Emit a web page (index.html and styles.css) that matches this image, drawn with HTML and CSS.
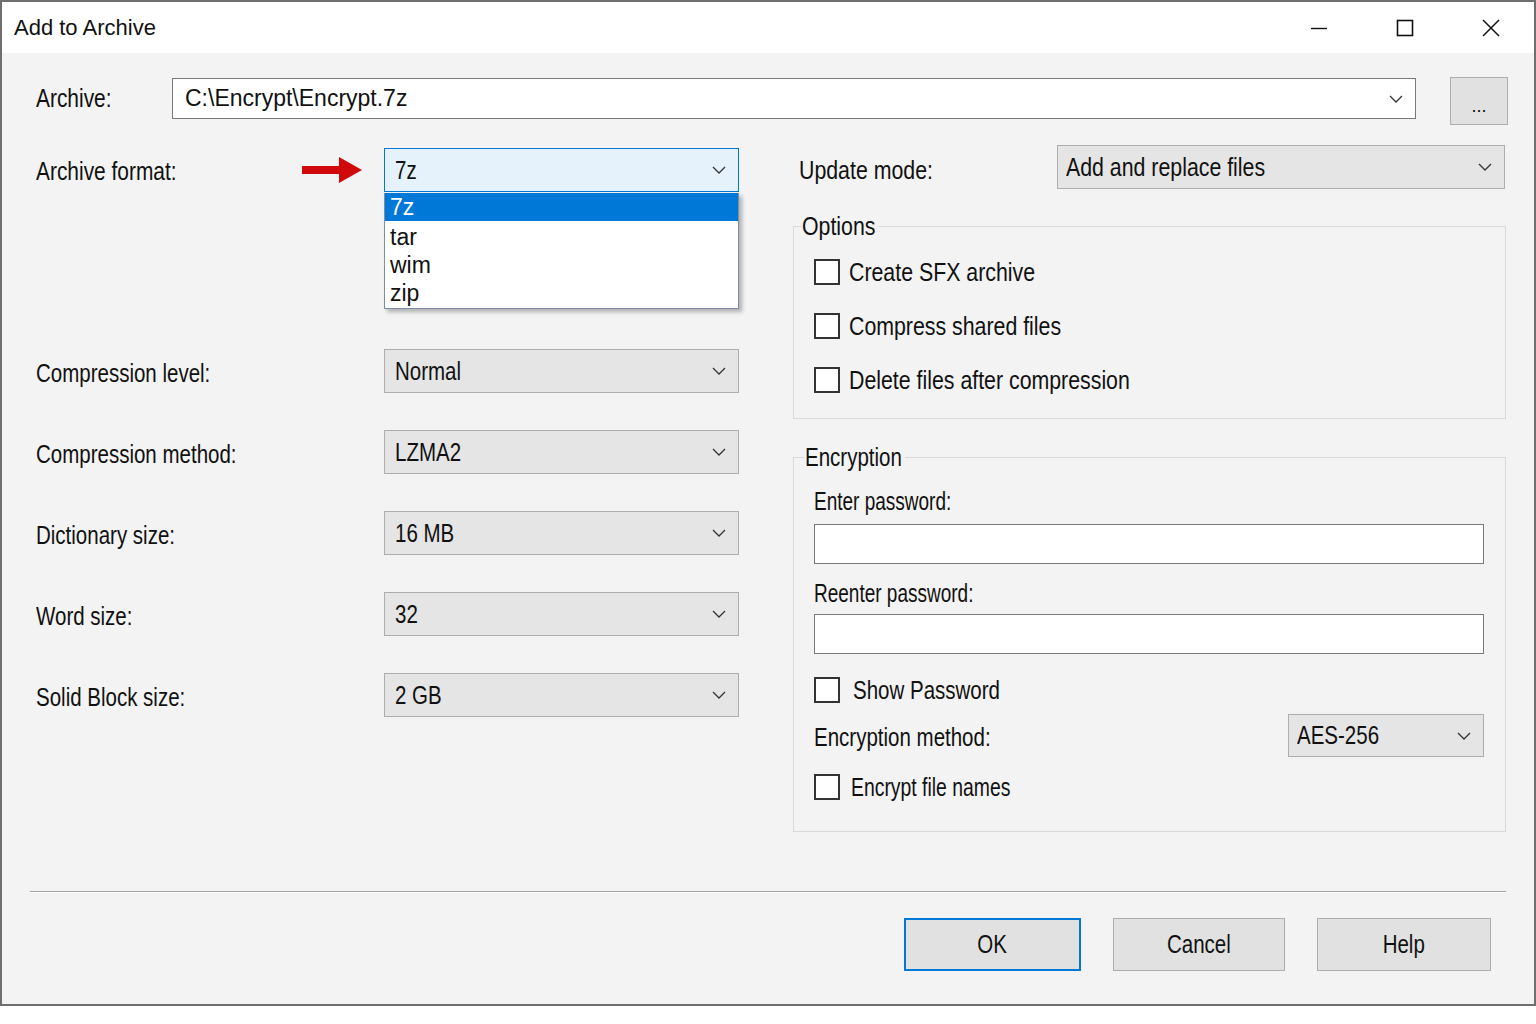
FILE: index.html
```html
<!DOCTYPE html>
<html lang="en">
<head>
    <meta charset="UTF-8">
    <meta name="viewport" content="width=device-width, initial-scale=1.0">
    <title>Add to Archive</title>
    <link rel="stylesheet" href="styles.css">
</head>
<body>

    <div class="window">
        <!-- Title bar -->
        <div class="titlebar">
            <span class="title">Add to Archive</span>
            <div class="controls">
                <span class="ctl">
                    <svg width="18" height="18" viewBox="0 0 18 18"><path d="M1 9.5 H17" stroke="#111" stroke-width="1.4" fill="none"/></svg>
                </span>
                <span class="ctl">
                    <svg width="18" height="18" viewBox="0 0 18 18"><rect x="1.5" y="1.5" width="15" height="15" stroke="#111" stroke-width="1.6" fill="none"/></svg>
                </span>
                <span class="ctl">
                    <svg width="18" height="18" viewBox="0 0 18 18"><path d="M1 1 L17 17 M17 1 L1 17" stroke="#111" stroke-width="1.5" fill="none"/></svg>
                </span>
            </div>
        </div>

        <div class="content">
            <!-- Archive path -->
            <div class="archive-row">
                <label class="lbl archive-lbl"><span class="n">Archive:</span></label>
                <div class="combo combo-edit">
                    <span class="path">C:\Encrypt\Encrypt.7z</span>
                    <svg class="chev" width="14" height="8" viewBox="0 0 14 8"><path d="M1 1 L7 7 L13 1" stroke="#333" stroke-width="1.3" fill="none"/></svg>
                </div>
                <button class="browse">...</button>
            </div>

            <div class="main">
                <!-- Left column -->
                <div class="left">
                    <div class="field-row format-row">
                        <label class="lbl field-lbl"><span class="n">Archive format:</span>
                            <svg class="arrow" width="60" height="26" viewBox="0 0 60 26"><path d="M0 9 H37 V0 L60 13 L37 26 V17 H0 Z" fill="#d00a0a"/></svg>
                        </label>
                        <div class="combo-wrap">
                            <div class="combo combo-open">
                                <span class="n">7z</span>
                                <svg class="chev" width="14" height="8" viewBox="0 0 14 8"><path d="M1 1 L7 7 L13 1" stroke="#333" stroke-width="1.3" fill="none"/></svg>
                            </div>
                            <ul class="dropdown">
                                <li class="selected">7z</li>
                                <li>tar</li>
                                <li>wim</li>
                                <li>zip</li>
                            </ul>
                        </div>
                    </div>

                    <div class="field-row">
                        <label class="lbl field-lbl"><span class="n">Compression level:</span></label>
                        <div class="combo">
                            <span class="n">Normal</span>
                            <svg class="chev" width="14" height="8" viewBox="0 0 14 8"><path d="M1 1 L7 7 L13 1" stroke="#333" stroke-width="1.3" fill="none"/></svg>
                        </div>
                    </div>

                    <div class="field-row">
                        <label class="lbl field-lbl"><span class="n">Compression method:</span></label>
                        <div class="combo">
                            <span class="n">LZMA2</span>
                            <svg class="chev" width="14" height="8" viewBox="0 0 14 8"><path d="M1 1 L7 7 L13 1" stroke="#333" stroke-width="1.3" fill="none"/></svg>
                        </div>
                    </div>

                    <div class="field-row">
                        <label class="lbl field-lbl"><span class="n">Dictionary size:</span></label>
                        <div class="combo">
                            <span class="n">16 MB</span>
                            <svg class="chev" width="14" height="8" viewBox="0 0 14 8"><path d="M1 1 L7 7 L13 1" stroke="#333" stroke-width="1.3" fill="none"/></svg>
                        </div>
                    </div>

                    <div class="field-row">
                        <label class="lbl field-lbl"><span class="n">Word size:</span></label>
                        <div class="combo">
                            <span class="n">32</span>
                            <svg class="chev" width="14" height="8" viewBox="0 0 14 8"><path d="M1 1 L7 7 L13 1" stroke="#333" stroke-width="1.3" fill="none"/></svg>
                        </div>
                    </div>

                    <div class="field-row">
                        <label class="lbl field-lbl"><span class="n">Solid Block size:</span></label>
                        <div class="combo">
                            <span class="n">2 GB</span>
                            <svg class="chev" width="14" height="8" viewBox="0 0 14 8"><path d="M1 1 L7 7 L13 1" stroke="#333" stroke-width="1.3" fill="none"/></svg>
                        </div>
                    </div>
                </div>

                <!-- Right column -->
                <div class="right">
                    <div class="update-row">
                        <label class="lbl update-lbl"><span class="n">Update mode:</span></label>
                        <div class="combo combo-update">
                            <span class="n">Add and replace files</span>
                            <svg class="chev" width="14" height="8" viewBox="0 0 14 8"><path d="M1 1 L7 7 L13 1" stroke="#333" stroke-width="1.3" fill="none"/></svg>
                        </div>
                    </div>

                    <fieldset class="group options">
                        <legend class="legend-options"><span class="n">Options</span></legend>
                        <div class="check-row"><span class="box"></span><span class="lbl n">Create SFX archive</span></div>
                        <div class="check-row"><span class="box"></span><span class="lbl n">Compress shared files</span></div>
                        <div class="check-row"><span class="box"></span><span class="lbl n">Delete files after compression</span></div>
                    </fieldset>

                    <fieldset class="group encryption">
                        <legend class="legend-encryption"><span class="n">Encryption</span></legend>
                        <div class="lbl pw-lbl"><span class="n">Enter password:</span></div>
                        <div class="textbox"></div>
                        <div class="lbl pw-lbl pw-lbl2"><span class="n">Reenter password:</span></div>
                        <div class="textbox textbox2"></div>
                        <div class="check-row show-pw"><span class="box"></span><span class="lbl n">Show Password</span></div>
                        <div class="method-row">
                            <span class="lbl method-lbl"><span class="n">Encryption method:</span></span>
                            <div class="combo combo-aes">
                                <span class="n">AES-256</span>
                                <svg class="chev" width="14" height="8" viewBox="0 0 14 8"><path d="M1 1 L7 7 L13 1" stroke="#333" stroke-width="1.3" fill="none"/></svg>
                            </div>
                        </div>
                        <div class="check-row enc-names"><span class="box"></span><span class="lbl n">Encrypt file names</span></div>
                    </fieldset>
                </div>
            </div>

            <div class="separator"></div>

            <div class="buttons">
                <button class="btn btn-default"><span class="n nc">OK</span></button>
                <button class="btn btn-cancel"><span class="n nc">Cancel</span></button>
                <button class="btn btn-help"><span class="n nc">Help</span></button>
            </div>
        </div>
    </div>

</body>
</html>
```

FILE: styles.css
```css
/* Window frame */
body {
    margin: 0;
    background-color: #fff;
    font-family: "Liberation Sans", Arial, sans-serif;
    color: #111;
}

.window {
    width: 1536px;
    height: 1006px;
    box-sizing: border-box;
    border: 2px solid #6f6f6f;
    background-color: #f3f3f3;
    display: flex;
    flex-direction: column;
}

.titlebar {
    height: 51px;
    background-color: #fff;
    display: flex;
    align-items: center;
    padding-left: 12px;
}

.title {
    font-size: 22px;
    color: #111;
}

.controls {
    margin-left: auto;
    display: flex;
    height: 100%;
}

.ctl {
    width: 86px;
    display: flex;
    align-items: center;
    justify-content: center;
}

.content {
    flex: 1;
    padding: 24px 26px 0 34px;
}

/* Narrow dialog text: squeezed to the condensed look of the dialog font */
.n {
    display: inline-block;
    white-space: nowrap;
    transform: scaleX(0.82);
    transform-origin: left center;
}

.nc {
    transform-origin: center center;
}

.lbl {
    font-size: 25px;
    line-height: 28px;
    color: #111;
}

/* Archive row */
.archive-row {
    display: flex;
    align-items: flex-start;
}

.archive-lbl {
    width: 136px;
    height: 42px;
    display: flex;
    align-items: center;
    font-size: 25.5px;
}

.combo {
    box-sizing: border-box;
    height: 44px;
    width: 355px;
    display: flex;
    align-items: center;
    padding: 0 12px 0 10px;
    background-color: #e5e5e5;
    border: 1px solid #adadad;
    font-size: 25px;
}

.combo span {
    flex: 1;
}

.combo .chev {
    flex: none;
}

.combo-edit {
    width: 1244px;
    height: 41px;
    margin-top: 1px;
    background-color: #fff;
    border-color: #7a7a7a;
    padding-left: 12px;
}

.path {
    font-size: 23px;
}

.browse {
    margin-left: 34px;
    width: 58px;
    height: 48px;
    background-color: #e1e1e1;
    border: 1px solid #adadad;
    font-family: inherit;
    font-size: 18px;
    padding-top: 12px;
    color: #111;
}

/* Main two columns */
.main {
    display: flex;
    margin-top: 20px;
}

.left {
    width: 703px;
    padding-top: 3px;
}

.field-row {
    display: flex;
    align-items: center;
    height: 44px;
    margin-bottom: 37px;
}

.format-row {
    margin-bottom: 157px;
}

.field-lbl {
    width: 348px;
    display: flex;
    align-items: center;
    padding-top: 3px;
}

.format-row .field-lbl {
    font-size: 25.5px;
    padding-top: 2px;
}

.arrow {
    margin-left: auto;
    margin-right: 22px;
    margin-top: -3px;
}

.combo-wrap {
    position: relative;
}

.combo-open {
    background-color: #e5f1fb;
    border: 1px solid #0078d7;
}

.dropdown {
    position: absolute;
    top: 45px;
    left: 0;
    width: 355px;
    box-sizing: border-box;
    margin: 0;
    padding: 0 0 1px;
    list-style: none;
    background-color: #fff;
    border: 1px solid #7a8ea8;
    border-top: none;
    box-shadow: 3px 3px 4px rgba(0, 0, 0, 0.28);
    font-size: 23px;
}

.dropdown li {
    height: 28px;
    line-height: 28px;
    padding-left: 5px;
    color: #111;
}

.dropdown li.selected {
    background-color: #0078d7;
    color: #fff;
    margin-bottom: 2px;
}

.right {
    width: 713px;
    margin-left: 54px;
}

.update-row {
    display: flex;
    align-items: center;
    height: 44px;
    padding-left: 6px;
}

.update-lbl {
    padding-top: 6px;
    font-size: 26px;
}

.combo-update {
    margin-left: auto;
    margin-right: 1px;
    width: 448px;
    padding-left: 8px;
    font-size: 26px;
}

/* Group boxes */
.group {
    margin: 23px 0 0;
    padding: 5px 21px 11px 20px;
    border: 1px solid #d8d8d8;
}

.group legend {
    font-size: 25px;
    line-height: 28px;
    padding: 0 2px 0 1px;
    margin-left: -13px;
    white-space: nowrap;
}

.group .legend-options {
    width: 75px;
    font-size: 26px;
}

.legend-encryption {
    width: 98px;
}

.check-row {
    display: flex;
    align-items: center;
    height: 54px;
}

.options .lbl {
    font-size: 26px;
}

.box {
    width: 22px;
    height: 22px;
    border: 2px solid #333;
    background-color: #fff;
    margin-right: 9px;
}

.encryption {
    margin-top: 24px;
    padding-top: 16px;
    padding-bottom: 31px;
}

.encryption .legend-encryption {
    margin-left: -10px;
}

.pw-lbl .n {
    transform: scaleX(0.76);
}

.textbox {
    box-sizing: border-box;
    height: 40px;
    margin-top: 9px;
    background-color: #fff;
    border: 1px solid #7a7a7a;
}

.pw-lbl2 {
    margin-top: 15px;
}

.textbox2 {
    margin-top: 7px;
}

.check-row.show-pw {
    height: 26px;
    margin-top: 23px;
}

.show-pw .box {
    margin-right: 13px;
}

.method-row {
    display: flex;
    align-items: center;
    margin-top: 11px;
}

.method-lbl {
    padding-top: 2px;
}

.combo-aes {
    margin-left: auto;
    width: 196px;
    height: 43px;
    padding-left: 8px;
}

.check-row.enc-names {
    height: 26px;
    margin-top: 17px;
}

.enc-names .box {
    margin-right: 11px;
}

.enc-names .n {
    transform: scaleX(0.775);
}

/* Footer */
.separator {
    margin: 59px 0 0 -6px;
    width: 1476px;
    height: 1px;
    background-color: #a0a0a0;
    border-bottom: 1px solid #fff;
}

.buttons {
    display: flex;
    justify-content: flex-end;
    gap: 32px;
    margin-top: 25px;
    margin-right: 17px;
}

.btn {
    height: 53px;
    background-color: #e1e1e1;
    border: 1px solid #adadad;
    font-family: inherit;
    font-size: 25px;
    color: #111;
    padding: 0;
}

.btn-default {
    width: 177px;
    border: 2px solid #0078d7;
}

.btn-cancel {
    width: 172px;
}

.btn-help {
    width: 174px;
}
```
